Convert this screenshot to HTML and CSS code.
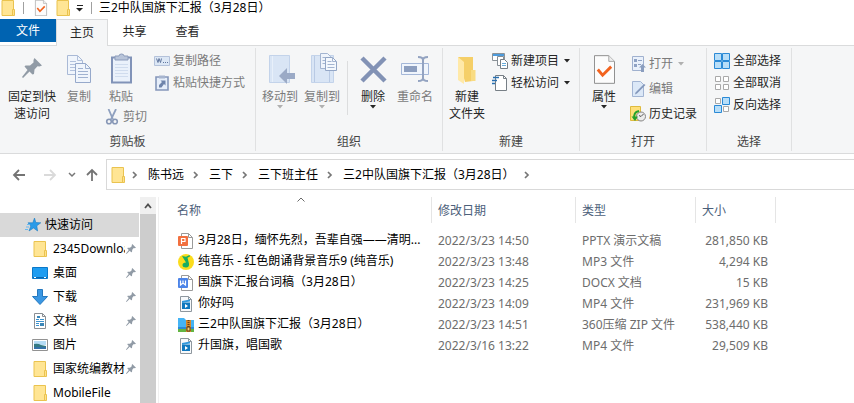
FILE: index.html
```html
<!DOCTYPE html>
<html lang="zh-CN">
  <head>
    <meta charset="utf-8">
    <meta name="viewport" content="width=device-width,initial-scale=1.0">
    <title>三2中队国旗下汇报（3月28日）</title>
    <link rel="stylesheet" href="styles.css">
  </head>
  <body>
    <!-- shared icons -->
    <svg class="defs" width="0" height="0">
      <symbol id="folder" viewBox="0 0 16 16">
        <path d="M2 .5h11.5v15H2z" fill="#ffe594" stroke="#eac34f"/>
        <path d="M12.5 9.5h2v6h-2z" fill="#ffe08a" stroke="#eac34f"/>
      </symbol>
      <symbol id="pin" viewBox="0 0 20 20">
        <path d="M12.500 0L20 7.500 17.500 8.500 15.500 8.200 12.500 11.500 12 16 10.500 16.500 7.500 13.500 1 20 0 19 5.500 12 2.500 8.500 3.500 7.500 8 7.500 11.500 4.500 11.500 2z" fill="#919ba6"/>
      </symbol>
      <symbol id="chevron" viewBox="0 0 6 8">
        <path d="M1 1l3 3-3 3" fill="none" stroke="#767676" stroke-width="1.700"/>
      </symbol>
      <symbol id="caret" viewBox="0 0 6 4">
        <path d="M0 0h6L3 3.500z" fill="currentColor"/>
      </symbol>
      <symbol id="page-check" viewBox="0 0 22 30">
        <path d="M.5.500h15l6 6v23H.5z" fill="#fcfcfc" stroke="#8a8a8a"/>
        <path d="M15.500.500v6h6" fill="#eee" stroke="#a5a5a5"/>
        <path d="M4 15l5 6 9-9" fill="none" stroke="#f2631f" stroke-width="3"/>
      </symbol>
      <symbol id="video" viewBox="0 0 16 16">
        <path d="M2.500.500h8l3 3v12h-11z" fill="#f7f9fb" stroke="#8e979e"/>
        <path d="M10.500.500v3h3" fill="none" stroke="#8e979e"/>
        <path d="M4 5l8-1.500v2L4 6.800z" fill="#2f97dc"/>
        <path d="M4 6.500h8V13H4z" fill="#0f78bf"/>
        <path d="M7 8l3 2-3 2z" fill="#fff"/>
      </symbol>
    </svg>

    <header class="titlebar">
      <svg class="icon"><use href="#folder"/></svg>
      <span class="bar-sep"></span>
      <svg class="icon"><use href="#page-check"/></svg>
      <svg class="icon"><use href="#folder"/></svg>
      <svg class="customize" width="8" height="8" viewBox="0 0 8 8"><path d="M1 1.500h6" stroke="#222"/><path d="M0 4h7L3.500 7.500z" fill="#222"/></svg>
      <span class="bar-sep"></span>
      <span class="window-title">三2中队国旗下汇报（3月28日）</span>
    </header>

    <nav class="tabs">
      <button class="tab tab-file">文件</button>
      <button class="tab tab-active">主页</button>
      <button class="tab">共享</button>
      <button class="tab">查看</button>
    </nav>

    <section class="ribbon">
      <!-- clipboard -->
      <div class="group group-clipboard">
        <div class="group-body">
          <button class="big big-wide">
            <svg class="big-icon" viewBox="0 0 32 32"><use href="#pin" x="6" y="5" width="20" height="20"/></svg>
            <span>固定到快<br>速访问</span>
          </button>
          <button class="big big-copy" disabled>
            <svg class="big-icon" viewBox="0 0 32 32">
              <path d="M4.500 2.500h10l5 5v14h-15z" fill="#f0f5fc" stroke="#a9b9d6"/>
              <path d="M14.500 2.500v5h5M7 8.500h6M7 11.500h7M7 14.500h6M7 17.500h6" fill="none" stroke="#b2c1dc"/>
              <path d="M12.500 10.500h10l5 5v14h-15z" fill="#f0f5fc" stroke="#96a9cb"/>
              <path d="M22.500 10.500v5h5M15 15.500h5M15 18.500h10M15 21.500h10M15 24.500h10" fill="none" stroke="#a0b2d1"/>
            </svg>
            <span>复制</span>
          </button>
          <div class="stack">
            <button class="big big-paste" disabled>
              <svg class="big-icon" viewBox="0 0 32 32">
                <path d="M7 4.500h19v25H7z" fill="#eaf1fb" stroke="#8193b8" stroke-width="2"/>
                <path d="M10 11.500h13M10 14.500h13M10 17.500h13M10 20.500h13M10 23.500h13" stroke="#d0dcee"/>
                <path d="M10 3h4q0-2 2.500-2T19 3h4v4H10z" fill="#b8c4d9" stroke="#8c9cbb"/>
              </svg>
              <span>粘贴</span>
            </button>
            <button class="small small-cut" disabled>
              <svg class="icon" viewBox="0 0 16 16">
                <path d="M4.500 0L9 10.500M12 0L7 10.500" stroke="#8fa0bf" stroke-width="1.800" fill="none"/>
                <circle cx="5" cy="12.500" r="2.300" fill="none" stroke="#8797b6" stroke-width="1.600"/>
                <circle cx="11" cy="12.500" r="2.300" fill="none" stroke="#8797b6" stroke-width="1.600"/>
              </svg>
              <span>剪切</span>
            </button>
          </div>
          <div class="list">
            <button class="small" disabled>
              <svg class="icon" viewBox="0 0 16 16">
                <path d="M.5 3.500h15v9H.5z" fill="#dce7f5" stroke="#b4c2da"/>
                <path d="M2.500 5.500l1.500 4 1-4 1.500 4 1-4M9 9.500h1M11 9.500h1M13 9.500h1" fill="none" stroke="#62779f"/>
              </svg>
              <span>复制路径</span>
            </button>
            <button class="small" disabled>
              <svg class="icon" viewBox="0 0 16 16">
                <path d="M2 2h12v13H2z" fill="#e6eefa" stroke="#8597ba" stroke-width="1.600"/>
                <path d="M5 .500h6v3H5z" fill="#a7b5cf"/>
                <path d="M5 12.500V10l3-3-1.500-1.500h5v5L10 9l-2.500 3.500z" fill="#6f84ab"/>
              </svg>
              <span>粘贴快捷方式</span>
            </button>
          </div>
        </div>
        <div class="group-label">剪贴板</div>
      </div>

      <!-- organize -->
      <div class="group group-organize">
        <div class="group-body">
          <button class="big" disabled>
            <svg class="big-icon" viewBox="0 0 32 32">
              <path d="M5.500 2.500h20v27h-20z" fill="#d9e5f5" stroke="#c3d3ea"/>
              <path d="M8.500 3v26" stroke="#e8f0fa"/>
              <path d="M15 23l8-8v5h8v6h-8v5z" fill="#9baac6"/>
            </svg>
            <span>移动到</span>
            <svg class="caret"><use href="#caret"/></svg>
          </button>
          <button class="big" disabled>
            <svg class="big-icon" viewBox="0 0 32 32">
              <path d="M5.500 2.500h22v27h-22z" fill="#d9e5f5" stroke="#c3d3ea"/>
              <path d="M8.500 3v26M23.500 18v11" stroke="#b9cae4"/>
              <path d="M14.500.500h7l3 3v12h-10z" fill="#eff4fb" stroke="#a3b4d0"/>
              <path d="M16.500 4.500h4M16.500 7.500h4M16.500 10.500h4" stroke="#a3b4d0"/>
              <path d="M19.500 4.500h7l4 4v9h-11z" fill="#f4f8fd" stroke="#93a6c6"/>
              <path d="M21.500 8.500h4M21.500 11.500h7M21.500 14.500h7M26.500 4.500v4h4" fill="none" stroke="#a3b4d0"/>
            </svg>
            <span>复制到</span>
            <svg class="caret"><use href="#caret"/></svg>
          </button>
          <span class="divider"></span>
          <button class="big">
            <svg class="big-icon" viewBox="0 0 32 32"><path d="M5 5l23 23M28 5L5 28" stroke="#8292b5" stroke-width="4.500"/></svg>
            <span>删除</span>
            <svg class="caret"><use href="#caret"/></svg>
          </button>
          <button class="big" disabled>
            <svg class="big-icon" viewBox="0 0 32 32">
              <path d="M2.500 10.500h27v11h-27z" fill="#f0f5fc" stroke="#a4b7d8"/>
              <path d="M5 13h13v6H5z" fill="#8c9ebf"/>
              <path d="M19 4q5 0 5 3 0-3 5-3M24 6v20M19 28q5 0 5-3 0 3 5 3" fill="none" stroke="#93a3c1" stroke-width="2"/>
            </svg>
            <span>重命名</span>
          </button>
        </div>
        <div class="group-label">组织</div>
      </div>

      <!-- new -->
      <div class="group group-new">
        <div class="group-body">
          <button class="big big-folder">
            <svg class="big-icon" viewBox="0 0 32 32">
              <path d="M7 4h15v24l-8 1z" fill="#f5cf68"/>
              <path d="M7 4l6 5v22l-6-4z" fill="#ffe9a8"/>
              <path d="M20 17h4.500v11H20z" fill="#f9dc83"/>
            </svg>
            <span>新建<br>文件夹</span>
          </button>
          <div class="list list-new">
            <button class="small">
              <svg class="icon" viewBox="0 0 16 16">
                <path d="M.5.500h12v7H.5z" fill="#fff" stroke="#8b9298"/>
                <path d="M1 1h11v2H1z" fill="#4d9bdc"/>
                <path d="M5.500 3.500h6v9h-6z" fill="#fff" stroke="#858d94"/>
                <path d="M8.500 6.500h4l3 3v6h-7z" fill="#fff" stroke="#757d84"/>
                <path d="M10 10.500h4M10 12.500h4" stroke="#6aabd9"/>
              </svg>
              <span>新建项目</span>
              <svg class="caret"><use href="#caret"/></svg>
            </button>
            <button class="small">
              <svg class="icon" viewBox="0 0 16 16">
                <path d="M3.500.500h8l3 3v12h-11z" fill="#fff" stroke="#777f86"/>
                <path d="M11.500.500v3h3" fill="none" stroke="#777f86"/>
                <path d="M1 2.500h6M0 5.500h5M0 8.500h3" stroke="#286fb0" stroke-width="1.500"/>
              </svg>
              <span>轻松访问</span>
              <svg class="caret"><use href="#caret"/></svg>
            </button>
          </div>
        </div>
        <div class="group-label">新建</div>
      </div>

      <!-- open -->
      <div class="group group-open">
        <div class="group-body">
          <button class="big big-folder">
            <svg class="big-icon" viewBox="0 0 32 32"><use href="#page-check" x="6" y="2" width="21" height="29"/></svg>
            <span>属性</span>
            <svg class="caret"><use href="#caret"/></svg>
          </button>
          <div class="list list-open">
            <button class="small" disabled>
              <svg class="icon" viewBox="0 0 16 16">
                <path d="M2.500.500h11v14h-11z" fill="#eaf1fb" stroke="#a0b1cf"/>
                <path d="M4 3h3v3H4zM4 8h3v3H4zM8 4h4v1H8zM8 8h3v1H8z" fill="#8fa2c4"/>
                <path d="M12.500 8L16 11.500h-2V16h-3v-4.500H9z" fill="#8b9ebf"/>
              </svg>
              <span>打开</span>
              <svg class="caret"><use href="#caret"/></svg>
            </button>
            <button class="small" disabled>
              <svg class="icon" viewBox="0 0 16 16">
                <path d="M2.500.500h8l3 3v12h-11z" fill="#dce8f7" stroke="#a3b5d3"/>
                <path d="M15.500 4L7 12.500l-2 1 .5-2L14 3z" fill="#8397bb"/>
              </svg>
              <span>编辑</span>
            </button>
            <button class="small">
              <svg class="icon" viewBox="0 0 16 16">
                <path d="M.5.500h10v14H.5z" fill="#ffe07a" stroke="#dfbb3e"/>
                <circle cx="11" cy="10.500" r="4.500" fill="#ececec" stroke="#858585"/>
                <path d="M13.500 8L11 10.500l-2-1" fill="none" stroke="#555"/>
                <path d="M9 5Q3 6 4.500 13" fill="none" stroke="#26a22d" stroke-width="2"/>
                <path d="M1.500 10.500H8L5 15z" fill="#26a22d"/>
              </svg>
              <span>历史记录</span>
            </button>
          </div>
        </div>
        <div class="group-label">打开</div>
      </div>

      <!-- select -->
      <div class="group group-select">
        <div class="group-body">
          <div class="list">
            <button class="small">
              <svg class="icon" viewBox="0 0 16 16"><path d="M.5.500h7v7h-7zM8.500.500h7v7h-7zM.5 8.500h7v7h-7zM8.500 8.500h7v7h-7z" fill="#b8def8" stroke="#2b8ad6"/></svg>
              <span>全部选择</span>
            </button>
            <button class="small">
              <svg class="icon" viewBox="0 0 16 16"><path d="M1.500 1.500h5v5h-5zM9.500 1.500h5v5h-5zM1.500 9.500h5v5h-5zM9.500 9.500h5v5h-5z" fill="#fff" stroke="#a9a9a9"/></svg>
              <span>全部取消</span>
            </button>
            <button class="small">
              <svg class="icon" viewBox="0 0 16 16"><path d="M1.500 1.500h5v5h-5zM9.500 9.500h5v5h-5z" fill="#fff" stroke="#a9a9a9"/><path d="M8.500.500h7v7h-7zM.5 8.500h7v7h-7z" fill="#b8def8" stroke="#2b8ad6"/></svg>
              <span>反向选择</span>
            </button>
          </div>
        </div>
        <div class="group-label">选择</div>
      </div>
    </section>

    <div class="navbar">
      <div class="nav-buttons">
        <button aria-label="后退"><svg width="14" height="12" viewBox="0 0 14 12"><path d="M13 6H2M7 1L2 6l5 5" fill="none" stroke="#747474" stroke-width="1.800"/></svg></button>
        <button class="forward" aria-label="前进"><svg width="14" height="12" viewBox="0 0 14 12"><path d="M1 6h11M7 1l5 5-5 5" fill="none" stroke="#dadada" stroke-width="1.800"/></svg></button>
        <button class="recent" aria-label="最近浏览的位置"><svg width="8" height="6" viewBox="0 0 8 6"><path d="M1 1l3 3 3-3" fill="none" stroke="#777" stroke-width="1.500"/></svg></button>
        <button aria-label="上移"><svg width="12" height="14" viewBox="0 0 12 14"><path d="M6 13V2M1 7l5-5 5 5" fill="none" stroke="#747474" stroke-width="1.800"/></svg></button>
      </div>
      <div class="address">
        <svg class="icon"><use href="#folder"/></svg>
        <svg class="chevron"><use href="#chevron"/></svg>
        <a href="#">陈书远</a>
        <svg class="chevron"><use href="#chevron"/></svg>
        <a href="#">三下</a>
        <svg class="chevron"><use href="#chevron"/></svg>
        <a href="#">三下班主任</a>
        <svg class="chevron"><use href="#chevron"/></svg>
        <a href="#">三2中队国旗下汇报（3月28日）</a>
        <svg class="chevron"><use href="#chevron"/></svg>
      </div>
    </div>

    <main class="content">
      <aside class="sidebar">
        <a class="side-item side-root" href="#">
          <svg class="icon" viewBox="0 0 16 16">
            <path d="M9.500 1l1.300 4.500 5 .3-4 3 .8 5.200-4.100-3L4 14l1.800-5L3 5.800h4.800z" fill="#2a9be8" stroke="#1d7ec4" stroke-width=".6"/>
            <path d="M2 7.500h3M1 10h3M0 12.500h3" stroke="#69b8ee"/>
          </svg>
          <span>快速访问</span>
        </a>
        <a class="side-item" href="#"><svg class="icon"><use href="#folder"/></svg><span>2345Downloads</span><svg class="pin"><use href="#pin"/></svg></a>
        <a class="side-item" href="#">
          <svg class="icon" viewBox="0 0 16 16"><path d="M.5 2.500h15v11H.5z" fill="#1e9df1" stroke="#0b78c8"/><path d="M1 12.500h14" stroke="#0a68b0"/><path d="M2 12.500h2M12 12.500h2" stroke="#fff"/></svg>
          <span>桌面</span><svg class="pin"><use href="#pin"/></svg>
        </a>
        <a class="side-item" href="#">
          <svg class="icon" viewBox="0 0 16 16"><path d="M5.500.500h5v7h5L8 15.500.500 7.500h5z" fill="#3a97e3" stroke="#2478bf"/></svg>
          <span>下载</span><svg class="pin"><use href="#pin"/></svg>
        </a>
        <a class="side-item" href="#">
          <svg class="icon" viewBox="0 0 16 16"><path d="M2.500.500h8l3 3v12h-11z" fill="#fff" stroke="#8a8f94"/><path d="M10.500.500v3h3" fill="none" stroke="#8a8f94"/><path d="M4 6.500h3M8 6.500h4M4 8.500h8M4 10.500h3M4 12.500h3" stroke="#3c93cf"/><path d="M5 3h3v2H5zM8 10h4v3H8z" fill="#3b87b8"/></svg>
          <span>文档</span><svg class="pin"><use href="#pin"/></svg>
        </a>
        <a class="side-item" href="#">
          <svg class="icon" viewBox="0 0 16 16"><path d="M.5 2.500h15v11H.5z" fill="#fff" stroke="#929292"/><path d="M2 4h12v4H2z" fill="#b5dcf5"/><path d="M2 7q4-1 7 1l5 1v3H2z" fill="#347a83"/><path d="M2 10h12v2H2z" fill="#3471a8"/></svg>
          <span>图片</span><svg class="pin"><use href="#pin"/></svg>
        </a>
        <a class="side-item" href="#"><svg class="icon"><use href="#folder"/></svg><span>国家统编教材</span><svg class="pin"><use href="#pin"/></svg></a>
        <a class="side-item" href="#"><svg class="icon"><use href="#folder"/></svg><span>MobileFile</span></a>
      </aside>
      <div class="scrollbar">
        <button class="scroll-up" aria-label="向上滚动"><svg width="8" height="6" viewBox="0 0 8 6"><path d="M1 5l3-3.500L7 5" fill="none" stroke="#505050" stroke-width="1.800"/></svg></button>
        <div class="scroll-thumb"></div>
      </div>

      <div class="files">
        <table>
          <thead>
            <tr>
              <th class="col-name">名称<svg class="sort" viewBox="0 0 8 5"><path d="M.5 4.500L4 1l3.500 3.500" fill="none" stroke="#6a6a6a"/></svg></th>
              <th class="col-date">修改日期</th>
              <th class="col-type">类型</th>
              <th class="col-size">大小</th>
              <th class="col-rest"></th>
            </tr>
          </thead>
          <tbody>
            <tr>
              <td class="name">
                <svg class="icon" viewBox="0 0 16 16"><path d="M3.500.500h7l4 4v11h-11z" fill="#fff" stroke="#9a9a9a"/><path d="M10.500.500v4h4" fill="none" stroke="#9a9a9a"/><rect y="3" width="10" height="10" rx="1" fill="#f2703f"/><path d="M3.500 11V5.500h3.500v3H3.500" fill="none" stroke="#fff" stroke-width="1.200"/></svg>
                3月28日，缅怀先烈，吾辈自强——清明...
              </td>
              <td>2022/3/23 14:50</td><td>PPTX 演示文稿</td><td class="size">281,850 KB</td>
            </tr>
            <tr>
              <td class="name">
                <svg class="icon" viewBox="0 0 16 16"><circle cx="8" cy="8" r="8" fill="#fbdc1c"/><path d="M4 2l4 .8L11.500 1l.5 1.500-2.500 1.200L11 9.500q.5 4-3 4T4.500 11 8 8.500z" fill="#18ad61"/></svg>
                纯音乐 - 红色朗诵背景音乐9 (纯音乐)
              </td>
              <td>2022/3/23 13:48</td><td>MP3 文件</td><td class="size">4,294 KB</td>
            </tr>
            <tr>
              <td class="name">
                <svg class="icon" viewBox="0 0 16 16"><path d="M3.500.500h7l4 4v11h-11z" fill="#fff" stroke="#9a9a9a"/><path d="M10.500.500v4h4" fill="none" stroke="#9a9a9a"/><rect y="3" width="10" height="10" rx="1" fill="#4c84e8"/><path d="M2.500 5.500v4.500L5 8l2.500 2V5.500M5 5.500V8" fill="none" stroke="#fff" stroke-width="1.200"/></svg>
                国旗下汇报台词稿（3月28日）
              </td>
              <td>2022/3/23 14:25</td><td>DOCX 文档</td><td class="size">15 KB</td>
            </tr>
            <tr>
              <td class="name"><svg class="icon"><use href="#video"/></svg> 你好吗</td>
              <td>2022/3/23 14:09</td><td>MP4 文件</td><td class="size">231,969 KB</td>
            </tr>
            <tr>
              <td class="name">
                <svg class="icon" viewBox="0 0 16 16"><path d="M0 1h6l2 2h8v9H0z" fill="#45b4f5"/><path d="M0 12h16v3H0z" fill="#63b543"/><path d="M0 10h16v2H0z" fill="#2d8ad6"/><path d="M8 3h5v12H8z" fill="#d98a2b"/><path d="M10.500 3v8" stroke="#6b4018" stroke-dasharray="1 1" stroke-width="2"/><path d="M9 10h3v4H9z" fill="#f7cf70" stroke="#5d3a18"/></svg>
                三2中队国旗下汇报（3月28日）
              </td>
              <td>2022/3/23 14:51</td><td>360压缩 ZIP 文件</td><td class="size">538,440 KB</td>
            </tr>
            <tr>
              <td class="name"><svg class="icon"><use href="#video"/></svg> 升国旗，唱国歌</td>
              <td>2022/3/16 13:22</td><td>MP4 文件</td><td class="size">29,509 KB</td>
            </tr>
          </tbody>
        </table>
      </div>
    </main>
  </body>
</html>
```

FILE: styles.css
```css
* { box-sizing: border-box; }
body { display: flex; flex-direction: column; height: 100vh; margin: 0; overflow: hidden; background: #fff; color: #000; font: 12px/16px "Noto Sans", "Noto Sans CJK SC", sans-serif; }
button { display: flex; align-items: center; padding: 0; border: none; background: none; color: #262626; font: inherit; white-space: nowrap; }
button:disabled { color: #7b7b7b; }
a { color: inherit; text-decoration: none; white-space: nowrap; }
svg { display: block; flex: none; }
.defs { position: absolute; }
.icon { width: 16px; height: 16px; }
.caret { width: 6px; height: 4px; }
button:disabled .caret { color: #b0b0b0; }

/* title bar */
.titlebar { display: flex; flex: none; align-items: center; height: 19px; padding-bottom: 4px; }
.bar-sep { width: 1px; height: 12px; margin: 0 9px 0 7px; background: #a0a0a0; }
.titlebar .icon + .icon { margin-left: 6px; }
.customize { margin-left: 5px; }
.customize + .bar-sep { margin-right: 7px; }

/* tabs */
.tabs { display: flex; flex: none; height: 27px; border-bottom: 1px solid #dadbdc; }
.tab { justify-content: center; width: 53px; height: 26px; }
.tab-file { width: 56px; height: 23px; background: #0063b1; color: #fff; }
.tab-active { width: 52px; height: 27px; border: 1px solid #dadbdc; border-bottom: none; background: #f5f6f7; }

/* ribbon */
.ribbon { display: flex; flex: none; height: 108px; border-bottom: 1px solid #dadbdc; background: #f5f6f7; }
.group { display: flex; flex-direction: column; margin: 2px 0; border-right: 1px solid #e0e1e2; }
.group-body { display: flex; flex: 1; padding-top: 5px; }
.group-label { padding-bottom: 1px; color: #444; text-align: center; }
.group-clipboard { width: 256px; }
.group-clipboard .group-body { padding-left: 4px; }
.group-organize { width: 187px; }
.group-organize .group-body { padding-left: 3px; }
.group-new { width: 137px; }
.group-open { width: 127px; }
.group-select { width: 85px; }
.group-select .group-body { padding-left: 7px; }

.big { flex-direction: column; align-self: flex-start; width: 42px; line-height: 17px; }
.big-icon { width: 32px; height: 32px; margin-bottom: 3px; }
.big-wide { width: 56px; }
.big-copy { width: 38px; }
.big-paste { width: 46px; }
.big-folder { width: 48px; }
.divider { width: 1px; height: 54px; margin: 8px 4px 0; background: #dcddde; }

.list { display: flex; flex-direction: column; gap: 6px; }
.group-clipboard .list { margin-left: 7px; }
.list-new { margin-left: 1px; }
.list-open { gap: 9px; padding: 3px 0 0 2px; }
.small { gap: 3px; height: 16px; }
.small .caret { margin-left: 2px; }
.small-cut { margin: 4px 0 0 6px; }

/* address bar */
.navbar { display: flex; flex: none; align-items: center; padding: 5px 0 7px; }
.nav-buttons { display: flex; align-items: center; width: 106px; padding-left: 12px; }
.forward { margin-left: 17px; }
.recent { margin: 0 10px 0 11px; }
.address { display: flex; flex: 1; align-items: center; height: 31px; padding-left: 3px; border: 1px solid #d9d9d9; border-right: none; }
.chevron { width: 6px; height: 8px; margin: 0 10px 0 9px; }
.address .icon + .chevron { margin-left: 6px; }

/* navigation pane */
.content { display: flex; flex: 1; min-height: 0; }
.sidebar { width: 139px; padding-top: 16px; overflow: hidden; }
.side-item { display: flex; align-items: center; height: 24px; padding: 0 3px 0 32px; }
.side-item span { flex: 1; margin-left: 5px; overflow: hidden; }
.side-root { padding-left: 25px; background: #d9d9d9; }
.side-root span { margin-left: 4px; }
.pin { width: 10px; height: 10px; margin-left: 1px; }
.scrollbar { display: flex; flex-direction: column; width: 16px; margin-left: 1px; background: #f0f0f0; }
.scroll-up { justify-content: center; height: 17px; }
.scroll-thumb { flex: 1; background: #cdcdcd; }

/* file list */
.files { flex: 1; min-width: 0; margin-left: 2px; border-left: 1px solid #f0f0f0; }
table { width: 100%; border-collapse: separate; border-spacing: 0; table-layout: fixed; }
th { position: relative; height: 26px; padding: 2px 6px 0; border-right: 1px solid #e5e5e5; color: #4c607a; font-weight: normal; text-align: left; }
.sort { position: absolute; top: 0; left: 138px; width: 8px; height: 5px; }
.col-name { width: 273px; padding-left: 18px; }
.col-date { width: 144px; }
.col-type { width: 120px; }
.col-size { width: 80px; }
.col-rest { border-right: none; }
tbody::before { display: table-row; height: 7px; content: ""; }
td { height: 21px; padding: 0 6px; color: #6d6d6d; white-space: nowrap; }
.name { padding: 0 0 0 19px; color: #000; }
.name .icon { display: inline-block; margin-right: 1px; vertical-align: middle; }
.size { padding-right: 8px; text-align: right; }
```
